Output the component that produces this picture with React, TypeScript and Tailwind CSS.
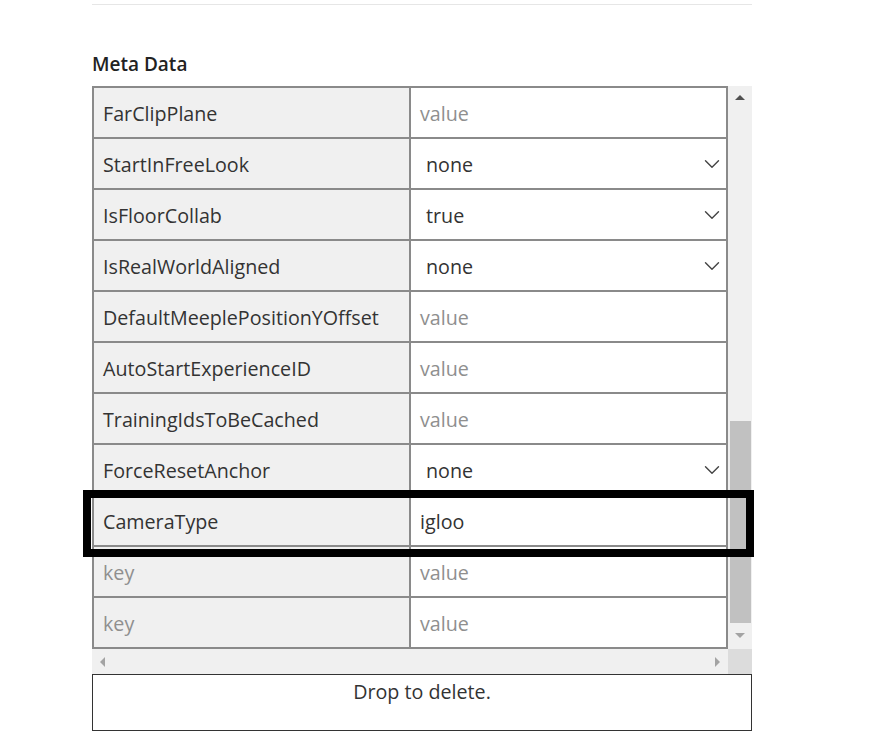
import { ChevronDown } from "lucide-react";

type Row = {
  key: string;
  value: string;
  kind: "input" | "select";
  placeholderKey?: boolean;
  placeholderValue?: boolean;
};

const ROWS: Row[] = [
  { key: "FarClipPlane", value: "value", kind: "input", placeholderValue: true },
  { key: "StartInFreeLook", value: "none", kind: "select" },
  { key: "IsFloorCollab", value: "true", kind: "select" },
  { key: "IsRealWorldAligned", value: "none", kind: "select" },
  { key: "DefaultMeeplePositionYOffset", value: "value", kind: "input", placeholderValue: true },
  { key: "AutoStartExperienceID", value: "value", kind: "input", placeholderValue: true },
  { key: "TrainingIdsToBeCached", value: "value", kind: "input", placeholderValue: true },
  { key: "ForceResetAnchor", value: "none", kind: "select" },
  { key: "CameraType", value: "igloo", kind: "input" },
  { key: "key", value: "value", kind: "input", placeholderKey: true, placeholderValue: true },
  { key: "key", value: "value", kind: "input", placeholderKey: true, placeholderValue: true },
];

function MetaRow({ row }: { row: Row }) {
  return (
    <div className="flex h-[51px] border-b-2 border-[#8a8a8a]">
      <div
        className={
          "flex w-[317px] items-center border-l-2 border-[#8a8a8a] bg-[#f0f0f0] pl-[9px] pt-[2px] " +
          (row.placeholderKey ? "text-[#8f8f8f]" : "text-[#333]")
        }
      >
        {row.key}
      </div>
      <div className="flex w-[319px] items-center border-x-2 border-[#8a8a8a] bg-white pt-[2px]">
        {row.kind === "select" ? (
          <div className="flex w-full items-center justify-between pl-[15px] pr-[1px] text-[#333]">
            <span>{row.value}</span>
            <ChevronDown className="h-[26px] w-[26px] text-[#444]" strokeWidth={1.3} />
          </div>
        ) : (
          <span className={"pl-[9px] " + (row.placeholderValue ? "text-[#8f8f8f]" : "text-[#333]")}>
            {row.value}
          </span>
        )}
      </div>
    </div>
  );
}

export default function App() {
  return (
    <div
      className="relative h-[741px] w-[881px] overflow-hidden bg-white text-[19.7px]"
      style={{ fontFamily: '"Open Sans", "Noto Sans", sans-serif' }}
    >
      <div className="ml-[92px] w-[660px] pt-[4px]">
        <div className="border-t border-[#e6e6e6]" />

        <h2 className="mt-[47px] mb-[9px] text-[19px] font-semibold leading-[25px] text-[#222]">
          Meta Data
        </h2>

        <div className="flex">
          <div className="w-[636px] border-t-2 border-[#8a8a8a]">
            {ROWS.map((row, i) => (
              <MetaRow key={i} row={row} />
            ))}
          </div>

          {/* vertical scrollbar */}
          <div className="flex w-[24px] flex-col items-center bg-[#f0f0f0]">
            <div className="flex h-[22px] items-center justify-center">
              <div className="h-0 w-0 border-x-[5px] border-b-[5px] border-x-transparent border-b-[#505050]" />
            </div>
            <div className="h-[313px]" />
            <div className="h-[202px] w-[21px] bg-[#c1c1c1]" />
            <div className="flex h-[24px] items-center justify-center">
              <div className="h-0 w-0 border-x-[5px] border-t-[5px] border-x-transparent border-t-[#a3a3a3]" />
            </div>
          </div>
        </div>

        {/* horizontal scrollbar */}
        <div className="flex h-[25px]">
          <div className="flex w-[636px] items-center justify-between bg-[#f0f0f0] px-[8px]">
            <div className="h-0 w-0 border-y-[5px] border-r-[5px] border-y-transparent border-r-[#a3a3a3]" />
            <div className="h-0 w-0 border-y-[5px] border-l-[5px] border-y-transparent border-l-[#a3a3a3]" />
          </div>
          <div className="w-[24px] bg-[#dcdcdc]" />
        </div>

        <div className="flex h-[57px] justify-center border border-[#333] pt-[4px] text-[19.7px] leading-[26px] text-[#333]">
          Drop to delete.
        </div>

        <div className="mt-[10px] border-t border-[#d6d6d6]" />
      </div>

      {/* highlight annotation */}
      <div className="pointer-events-none absolute left-[83px] top-[490px] h-[67px] w-[671px] border-[8px] border-black" />
    </div>
  );
}
